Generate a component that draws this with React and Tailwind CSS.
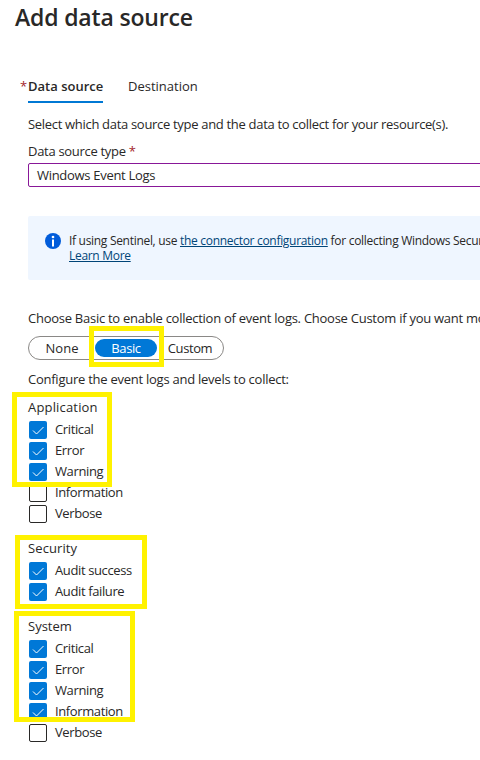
function Check({ label, checked }) {
  return (
    <label className="flex h-[21px] items-start">
      <span
        className={
          checked
            ? "ml-px h-[18px] w-[18px] shrink-0 rounded-[2px] bg-[#0078d7]"
            : "ml-px h-[18px] w-[18px] shrink-0 rounded-[2px] border border-[#292827] bg-white"
        }
      >
        {checked && (
          <svg viewBox="0 0 18 18" className="h-[18px] w-[18px]" fill="none" stroke="#fff" strokeWidth="1">
            <path d="M4 9.5 7.5 13 14.5 6" />
          </svg>
        )}
      </span>
      <span className="ml-2 leading-[16px] tracking-[-0.38px]">{label}</span>
    </label>
  );
}

export default function App() {
  return (
    <div className="relative h-[760px] w-[480px] overflow-hidden whitespace-nowrap bg-white font-['Open_Sans','Noto_Sans',sans-serif] text-[13px] leading-[18px] text-[#292827]">
      <h1 className="h-[77px] pl-[15px] pt-[3px] text-[23px] font-semibold leading-[28px] tracking-[-0.16px]">Add data source</h1>

      <div className="flex h-[26px] pl-[20px]">
        <span className="w-2 text-[#a4262c]">*</span>
        <div className="w-[75px] border-b-2 border-[#0078d4] font-semibold">Data source</div>
        <div className="ml-[25px]">Destination</div>
      </div>

      <div className="flex flex-col pl-7">
        <p className="mt-[12px] tracking-[-0.31px]">Select which data source type and the data to collect for your resource(s).</p>
        <div className="mt-[9px] h-[21px] tracking-[-0.3px]">
          Data source type <span className="text-[#a4262c]">*</span>
        </div>
        <div className="h-[24px] w-[470px] rounded-[2px] border border-[#881798] pl-2 leading-[23px] tracking-[-0.3px]">Windows Event Logs</div>

        <div className="mt-[29px] flex h-[64px] w-[470px] rounded-[2px] bg-[#eff6ff] pl-[17px] pt-[17px]">
          <svg viewBox="0 0 16 16" className="h-4 w-4 shrink-0">
            <circle cx="8" cy="8" r="8" fill="#015cda" />
            <circle cx="8" cy="4" r="1.35" fill="#fff" />
            <rect x="7" y="6.5" width="2" height="7" fill="#fff" />
          </svg>
          <p className="ml-2 text-[12px] leading-[15px] tracking-[-0.3px]">
            If using Sentinel, use <a className="text-[#004578] underline">the connector configuration</a> for collecting Windows Security Events.
            <br />
            <a className="text-[#004578] underline">Learn More</a>
          </p>
        </div>

        <p className="mt-[29px] tracking-[-0.26px]">Choose Basic to enable collection of event logs. Choose Custom if you want more</p>
        <div className="mt-[9px] flex h-[24px] w-[196px] items-center rounded-full border border-[#8a8886]">
          <span className="w-[66px] text-center">None</span>
          <span className="h-[18px] w-[62px] rounded-full bg-[#0078d7] text-center leading-[18px] tracking-[-0.4px] text-white">Basic</span>
          <span className="w-[66px] text-center tracking-[-0.4px]">Custom</span>
        </div>
        <p className="mt-[10px] tracking-[-0.25px]">Configure the event logs and levels to collect:</p>

        <section className="mt-[10px]">
          <h2 className="h-[23px] tracking-[0.17px]">Application</h2>
          <Check label="Critical" checked />
          <Check label="Error" checked />
          <Check label="Warning" checked />
          <Check label="Information" />
          <Check label="Verbose" />
        </section>
        <section className="mt-[13px]">
          <h2 className="h-[23px] tracking-[0.1px]">Security</h2>
          <Check label="Audit success" checked />
          <Check label="Audit failure" checked />
        </section>
        <section className="mt-[13px]">
          <h2 className="h-[23px]">System</h2>
          <Check label="Critical" checked />
          <Check label="Error" checked />
          <Check label="Warning" checked />
          <Check label="Information" checked />
          <Check label="Verbose" />
        </section>
      </div>

      <div className="absolute left-[89px] top-[326px] h-[41px] w-[75px] border-[5px] border-[#fff200]" />
      <div className="absolute left-[12px] top-[392px] h-[95px] w-[100px] border-[5px] border-[#fff200]" />
      <div className="absolute left-[15px] top-[535px] h-[74px] w-[132px] border-[5px] border-[#fff200]" />
      <div className="absolute left-[14px] top-[611px] h-[111px] w-[121px] border-[5px] border-[#fff200]" />
    </div>
  );
}
